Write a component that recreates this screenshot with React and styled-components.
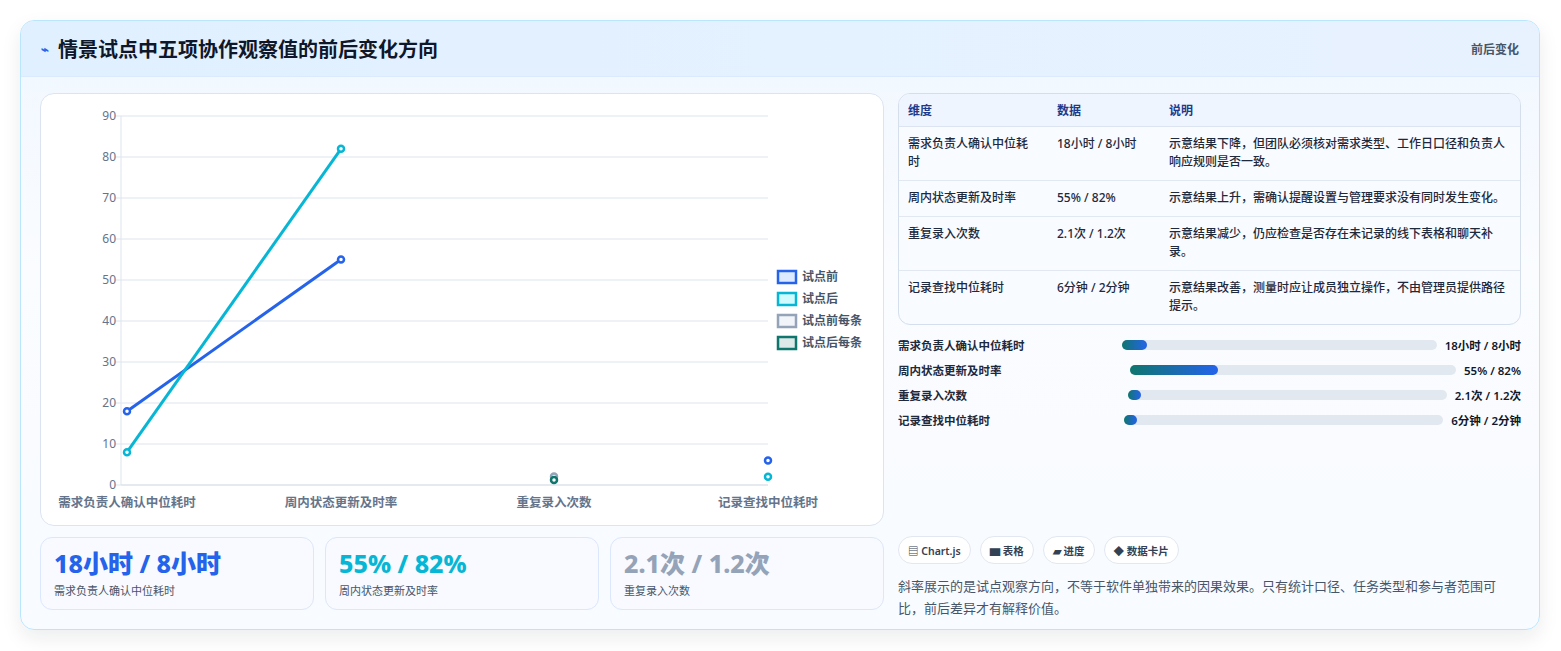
import React from "react";
import styled, { createGlobalStyle } from "styled-components";

const G = createGlobalStyle`
  html,body{margin:0;padding:0;background:#f1f5f9;}
  body{font-family:"Noto Sans","Noto Sans CJK SC",sans-serif;color:#0f172a;}
  *{box-sizing:border-box;}
`;
const Page = styled.div`padding:20px 21px 21px 20px;background:#fff;height:651px;`;
const Card = styled.div`
  border:1px solid #bae6fd;border-radius:14px;overflow:hidden;height:610px;
  background:linear-gradient(180deg,#f0f7ff 0%,#fafcff 40%,#f8fbff 100%);
  box-shadow:0 8px 20px rgba(15,23,42,.08);
`;
const Header = styled.div`
  height:56px;display:flex;align-items:center;justify-content:space-between;
  padding:0 20px 0 20px;background:linear-gradient(90deg,#e0f0ff,#e8f2ff);
  border-bottom:1px solid #dbeafe;
`;
const Title = styled.h1`margin:0;font-size:20px;font-weight:700;color:#0f172a;display:flex;align-items:center;gap:9px;`;
const Bolt = styled.span`color:#2563eb;font-size:13px;`;
const HeadTag = styled.span`font-size:12px;font-weight:600;color:#475569;`;
const Body = styled.div`display:grid;grid-template-columns:844px 623px;gap:14px;padding:16px 19px 0 19px;`;
const Left = styled.div`display:flex;flex-direction:column;gap:11px;`;
const ChartBox = styled.div`height:433px;background:#fff;border:1px solid #dbe4f0;border-radius:14px;`;
const Stats = styled.div`display:grid;grid-template-columns:repeat(3,1fr);gap:11px;`;
const Stat = styled.div`height:73px;border:1px solid #dbe7fb;border-radius:12px;background:#f8faff;padding:10px 13px;`;
const StatVal = styled.div`font-size:25px;font-weight:800;line-height:30px;color:${p=>p.c};`;
const StatLab = styled.div`font-size:11px;color:#475569;margin-top:4px;`;
const Right = styled.div`display:flex;flex-direction:column;`;
const Table = styled.table`
  width:100%;border-collapse:separate;border-spacing:0;border:1px solid #d5dfec;border-radius:12px;overflow:hidden;
  font-size:12px;background:#f8fbff;table-layout:fixed;
  th{background:#eef5ff;color:#1e3a8a;font-weight:600;text-align:left;padding:0 9px;height:33px;border-bottom:1px solid #dbe4f0;}
  td{padding:8px 9px 9px;color:#1e293b;line-height:18px;vertical-align:top;border-bottom:1px solid #e2e8f0;font-weight:500;}
  tr:last-child td{border-bottom:none;}
`;
const Bars = styled.div`display:flex;flex-direction:column;gap:7px;margin-top:11px;`;
const BarRow = styled.div`display:flex;align-items:center;font-size:11.5px;font-weight:600;height:18px;`;
const BarName = styled.span`width:224px;color:#1e293b;`;
const Track = styled.div`flex:1;height:10px;border-radius:5px;background:#e2e8f0;margin:0 8px 0 ${p=>p.ml}px;position:relative;`;
const Fill = styled.div`height:100%;border-radius:5px;background:linear-gradient(90deg,#0f766e,#2563eb);`;
const BarVal = styled.span`color:#0f172a;white-space:nowrap;`;
const Tags = styled.div`display:flex;gap:9px;margin-top:107px;`;
const Tag = styled.span`height:28px;padding:0 9px;border:1px solid #e2e8f0;border-radius:14px;background:#fff;font-size:10.5px;font-weight:600;color:#334155;display:flex;align-items:center;gap:4px;`;
const Note = styled.p`margin:11px 0 0;font-size:13px;line-height:22px;color:#475569;`;

const y = v => 391 - v * 4.1;
const xs = [86, 300, 513, 727];
const cats = ["需求负责人确认中位耗时","周内状态更新及时率","重复录入次数","记录查找中位耗时"];

function Chart(){
  const grid=[0,10,20,30,40,50,60,70,80,90];
  const leg=[["试点前","#2563eb","#dbeafe"],["试点后","#06b6d4","#cffafe"],["试点前每条","#94a3b8","#f1f5f9"],["试点后每条","#0f766e","#dde9e8"]];
  const dot=(cx,cy,c)=><circle cx={cx} cy={cy} r="3" fill="#fff" stroke={c} strokeWidth="2.5"/>;
  return (
    <svg width="844" height="433" style={{display:"block"}} fontFamily="Noto Sans, Noto Sans CJK SC, sans-serif">
      {grid.map(v=>(
        <g key={v}>
          <line x1="80" x2="727" y1={y(v)} y2={y(v)} stroke={v===0?"#cbd5e1":"#dde5ef"} strokeWidth="1"/>
          <line x1="74" x2="80" y1={y(v)} y2={y(v)} stroke="#dde5ef"/>
          <text x="75" y={y(v)+4} textAnchor="end" fontSize="12" fill="#64748b">{v}</text>
        </g>
      ))}
      <line x1="80" x2="80" y1="22" y2="391" stroke="#dde5ef"/>
      {cats.map((c,i)=><text key={c} x={xs[i]} y="413" textAnchor="middle" fontSize="12.5" fontWeight="600" fill="#64748b">{c}</text>)}
      <line x1={xs[0]} y1={y(18)} x2={xs[1]} y2={y(55)} stroke="#2563eb" strokeWidth="3"/>
      <line x1={xs[0]} y1={y(8)} x2={xs[1]} y2={y(82)} stroke="#06b6d4" strokeWidth="3"/>
      {dot(xs[0],y(18),"#2563eb")}{dot(xs[1],y(55),"#2563eb")}
      {dot(xs[0],y(8),"#06b6d4")}{dot(xs[1],y(82),"#06b6d4")}
      {dot(xs[2],y(2.1),"#94a3b8")}{dot(xs[2],y(1.2),"#0f766e")}
      {dot(xs[3],y(6),"#2563eb")}{dot(xs[3],y(2),"#06b6d4")}
      {leg.map(([t,c,f],i)=>(
        <g key={t}>
          <rect x="737" y={177+i*22} width="18" height="12" fill={f} stroke={c} strokeWidth="2.5"/>
          <text x="761" y={187+i*22} fontSize="12" fontWeight="600" fill="#475569">{t}</text>
        </g>
      ))}
    </svg>
  );
}

const rows=[
  ["需求负责人确认中位耗时","18小时 / 8小时","示意结果下降，但团队必须核对需求类型、工作日口径和负责人响应规则是否一致。"],
  ["周内状态更新及时率","55% / 82%","示意结果上升，需确认提醒设置与管理要求没有同时发生变化。"],
  ["重复录入次数","2.1次 / 1.2次","示意结果减少，仍应检查是否存在未记录的线下表格和聊天补录。"],
  ["记录查找中位耗时","6分钟 / 2分钟","示意结果改善，测量时应让成员独立操作，不由管理员提供路径提示。"],
];
const bars=[["需求负责人确认中位耗时",0,8,"18小时 / 8小时"],["周内状态更新及时率",8,27,"55% / 82%"],["重复录入次数",6,4,"2.1次 / 1.2次"],["记录查找中位耗时",2,4,"6分钟 / 2分钟"]];

export default function App(){
  return (<>
    <G/>
    <Page><Card>
      <Header><Title><Bolt>⌁</Bolt>情景试点中五项协作观察值的前后变化方向</Title><HeadTag>前后变化</HeadTag></Header>
      <Body>
        <Left>
          <ChartBox><Chart/></ChartBox>
          <Stats>
            <Stat><StatVal c="#2563eb">18小时 / 8小时</StatVal><StatLab>需求负责人确认中位耗时</StatLab></Stat>
            <Stat><StatVal c="#06b6d4">55% / 82%</StatVal><StatLab>周内状态更新及时率</StatLab></Stat>
            <Stat><StatVal c="#94a3b8">2.1次 / 1.2次</StatVal><StatLab>重复录入次数</StatLab></Stat>
          </Stats>
        </Left>
        <Right>
          <Table>
            <colgroup><col style={{width:149}}/><col style={{width:112}}/><col/></colgroup>
            <thead><tr><th>维度</th><th>数据</th><th>说明</th></tr></thead>
            <tbody>{rows.map(r=><tr key={r[0]}><td>{r[0]}</td><td>{r[1]}</td><td>{r[2]}</td></tr>)}</tbody>
          </Table>
          <Bars>{bars.map(([n,ml,w,v])=>(
            <BarRow key={n}><BarName>{n}</BarName><Track ml={ml}><Fill style={{width:w+"%"}}/></Track><BarVal>{v}</BarVal></BarRow>
          ))}</Bars>
          <Tags><Tag>▤ Chart.js</Tag><Tag>▆ 表格</Tag><Tag>▰ 进度</Tag><Tag>◆ 数据卡片</Tag></Tags>
          <Note>斜率展示的是试点观察方向，不等于软件单独带来的因果效果。只有统计口径、任务类型和参与者范围可比，前后差异才有解释价值。</Note>
        </Right>
      </Body>
    </Card></Page>
  </>);
}
